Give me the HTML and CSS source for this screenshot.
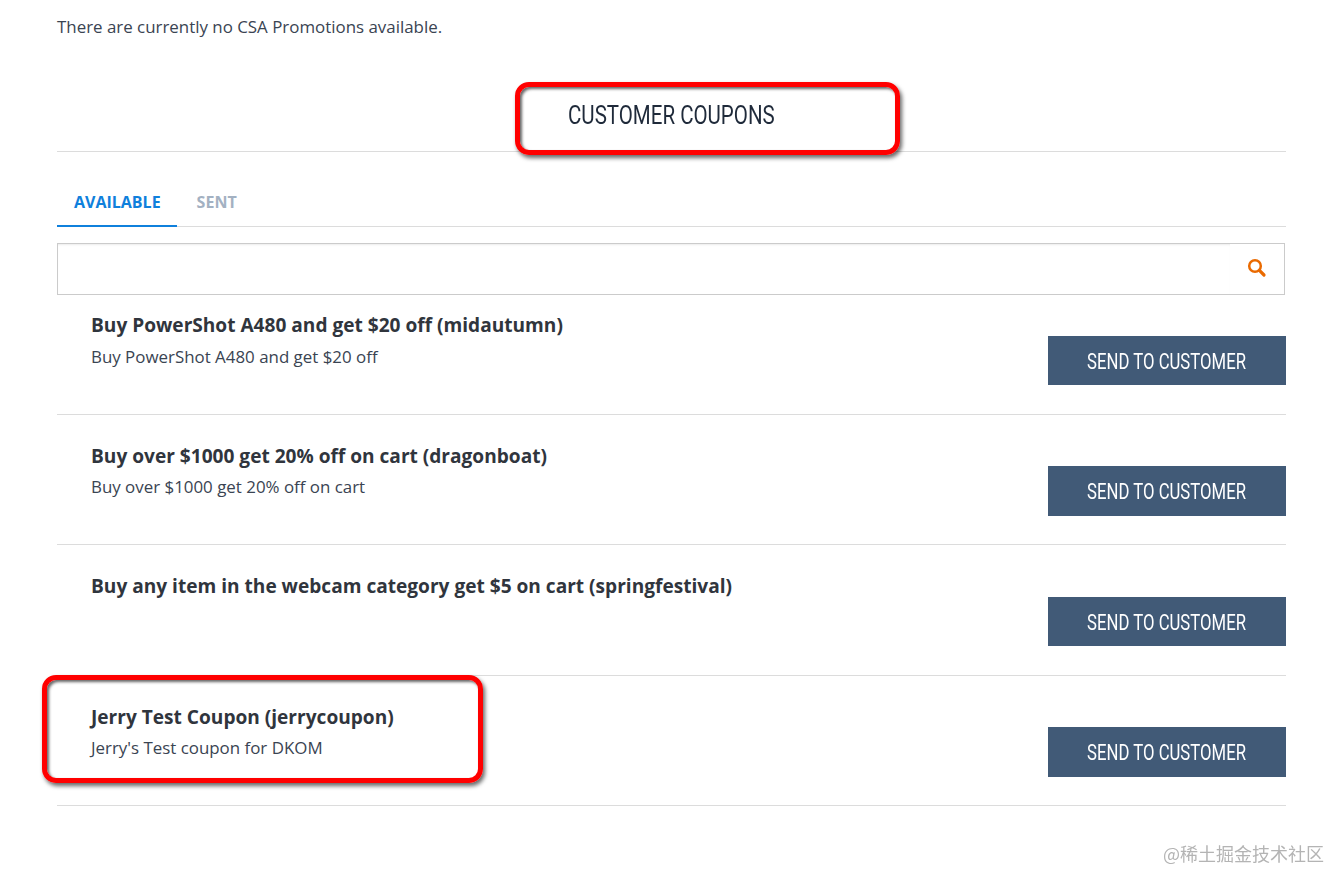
FILE: index.html
```html
<!DOCTYPE html>
<html lang="en">
<head>
    <meta charset="UTF-8">
    <title>Customer Coupons</title>
    <link rel="stylesheet" href="styles.css">
</head>
<body>
    <div id="container">
        <p class="notice">There are currently no CSA Promotions available.</p>
        <h2 class="title"><span>CUSTOMER COUPONS</span></h2>
        <ul class="tabs">
            <li class="selected">AVAILABLE</li>
            <li>SENT</li>
        </ul>
        <div class="search">
            <input type="text" class="search-input">
            <span class="search-btn">
                <svg width="20" height="20" viewBox="0 0 20 20">
                    <circle cx="8" cy="8" r="5.8" fill="none" stroke="#ea6a00" stroke-width="2.5"/>
                    <path d="M12.4 12.4 L17 17" stroke="#ea6a00" stroke-width="3.2" stroke-linecap="round"/>
                </svg>
            </span>
        </div>
        <div class="coupon first">
            <div class="info">
                <h3>Buy PowerShot A480 and get $20 off (midautumn)</h3>
                <p>Buy PowerShot A480 and get $20 off</p>
            </div>
            <a class="send"><span>SEND TO CUSTOMER</span></a>
        </div>
        <div class="coupon">
            <div class="info">
                <h3>Buy over $1000 get 20% off on cart (dragonboat)</h3>
                <p>Buy over $1000 get 20% off on cart</p>
            </div>
            <a class="send"><span>SEND TO CUSTOMER</span></a>
        </div>
        <div class="coupon">
            <div class="info">
                <h3>Buy any item in the webcam category get $5 on cart (springfestival)</h3>
            </div>
            <a class="send"><span>SEND TO CUSTOMER</span></a>
        </div>
        <div class="coupon">
            <div class="info">
                <h3>Jerry Test Coupon (jerrycoupon)</h3>
                <p>Jerry's Test coupon for DKOM</p>
            </div>
            <a class="send"><span>SEND TO CUSTOMER</span></a>
        </div>
    </div>
    <!--annotations drawn over the screenshot-->
    <div class="mark mark-title"></div>
    <div class="mark mark-coupon"></div>
    <div class="watermark">@稀土掘金技术社区</div>
</body>
</html>
```

FILE: styles.css
```css
*{
    margin: 0;
    padding: 0;
    box-sizing: border-box;
}
html,body{
    height: 870px;
    overflow: hidden;
    background: #fff;
}
body{
    font-family: "Open Sans", "Noto Sans", sans-serif;
    color: #3a4452;
    position: relative;
}
li{
    list-style: none;
}
#container{
    width: 1229px;
    margin-left: 57px;
    padding-top: 16px;
}
.notice{
    font-size: 16.9px;
    line-height: 22px;
    height: 22px;
}
.title{
    height: 114px;
    padding: 61px 0 0 511px;
    border-bottom: 1px solid #dcdcdc;
    font-family: "Roboto", sans-serif;
    font-weight: 400;
    font-size: 25px;
    line-height: 33px;
    color: #1f2a3a;
}
/* no narrow font installed, so squeeze the text */
.title span{
    display: inline-block;
    transform: scaleX(.82);
    transform-origin: left center;
}
.tabs{
    display: flex;
    height: 75px;
    border-bottom: 1px solid #dcdcdc;
    padding-top: 31px;
}
.tabs li{
    height: 44px;
    padding: 7px 17px 0;
    margin-right: 3px;
    font-size: 16px;
    line-height: 24px;
    font-weight: 700;
    color: #a3b1c2;
}
.tabs li.selected{
    padding-right: 16px;
    color: #0f80dc;
    border-bottom: 2px solid #0f80dc;
}
.search{
    display: flex;
    width: 1228px;
    height: 52px;
    margin-top: 16px;
    border: 1px solid #cbcbcb;
}
.search-input{
    flex: 1;
    border: 0;
    outline: 0;
    box-shadow: inset 0 2px 2px -1px rgba(0,0,0,.08);
}
.search-btn{
    width: 54px;
    display: flex;
    align-items: center;
    justify-content: center;
    padding-bottom: 2px;
}
.coupon{
    display: flex;
    justify-content: space-between;
    height: 130.3px;
    padding: 28px 0 0 34px;
    border-bottom: 1px solid #dcdcdc;
}
.coupon.first{
    height: 120px;
    padding-top: 17.3px;
}
.info h3{
    font-size: 19.1px;
    line-height: 26px;
    font-weight: 700;
    color: #30353d;
}
.info p{
    font-size: 16.9px;
    line-height: 22px;
    margin-top: 7.4px;
}
.send{
    display: block;
    width: 238px;
    height: 49.8px;
    margin-top: 23.3px;
    background: #415a77;
    color: #fff;
    text-align: center;
    font-family: "Roboto", sans-serif;
    font-size: 22px;
    line-height: 51px;
}
.send span{
    display: inline-block;
    white-space: nowrap;
    transform: scaleX(.76);
}
.mark{
    position: absolute;
    border: 5px solid #f00;
    border-radius: 14px;
    box-shadow: 2px 3px 4px rgba(0,0,0,.6), inset 2px 2px 3px rgba(0,0,0,.6);
}
.mark-title{
    left: 515px;
    top: 82px;
    width: 385px;
    height: 73px;
}
.mark-coupon{
    left: 42px;
    top: 675px;
    width: 441px;
    height: 108px;
}
.watermark{
    position: absolute;
    right: 6px;
    top: 841px;
    font-family: "Noto Sans CJK SC", "Noto Sans", sans-serif;
    font-size: 18px;
    line-height: 24px;
    color: #b4b4b4;
    filter: blur(.4px);
}
```
